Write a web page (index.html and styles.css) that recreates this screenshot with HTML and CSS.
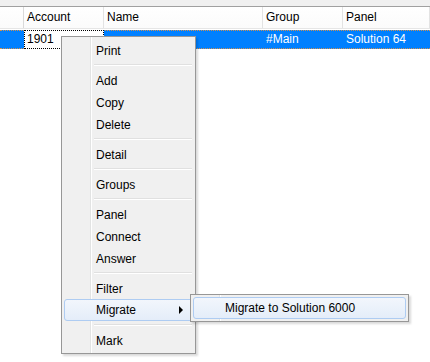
FILE: index.html
```html
<!DOCTYPE html>
<html lang="en">
<head>
    <meta charset="UTF-8">
    <title>Accounts</title>
    <link rel="stylesheet" href="styles.css">
</head>
<body>

    <div class="toolbar-strip"></div>

    <div class="grid">
        <div class="grid-row header">
            <div class="cell col-indicator"></div>
            <div class="cell col-account">Account</div>
            <div class="cell col-name">Name</div>
            <div class="cell col-group">Group</div>
            <div class="cell col-panel">Panel</div>
        </div>
        <div class="grid-row data selected">
            <div class="cell col-indicator"></div>
            <div class="cell col-account focused">1901</div>
            <div class="cell col-name"></div>
            <div class="cell col-group">#Main</div>
            <div class="cell col-panel">Solution 64</div>
        </div>
    </div>

    <!-- context menu -->
    <div class="context-menu">
        <div class="menu-item">Print</div>
        <div class="menu-separator"></div>
        <div class="menu-item">Add</div>
        <div class="menu-item">Copy</div>
        <div class="menu-item">Delete</div>
        <div class="menu-separator"></div>
        <div class="menu-item">Detail</div>
        <div class="menu-separator"></div>
        <div class="menu-item">Groups</div>
        <div class="menu-separator"></div>
        <div class="menu-item">Panel</div>
        <div class="menu-item">Connect</div>
        <div class="menu-item">Answer</div>
        <div class="menu-separator"></div>
        <div class="menu-item">Filter</div>
        <div class="menu-item has-sub hover">Migrate<span class="sub-arrow"></span></div>
        <div class="menu-separator"></div>
        <div class="menu-item">Mark</div>

        <div class="context-menu submenu">
            <div class="menu-item hover">Migrate to Solution 6000</div>
        </div>
    </div>

</body>
</html>
```

FILE: styles.css
```css
/* Layout basico */
body {
    margin: 0;
    width: 430px;
    height: 362px;
    overflow: hidden;
    background-color: #fff;
    font-family: "Liberation Sans", Arial, sans-serif;
    font-size: 12px;
    color: #000;
    position: relative;
}

.toolbar-strip {
    height: 6px;
    background-color: #f0f0f0;
    border-bottom: 1px solid #a0a0a0;
}

/* Grid */
.grid-row {
    display: flex;
}

.cell {
    box-sizing: border-box;
    padding-left: 3px;
    white-space: nowrap;
    overflow: hidden;
}

.col-indicator { width: 24px; padding: 0; }
.col-account { width: 80px; }
.col-name { width: 159px; }
.col-group { width: 80px; }
.col-panel { flex: 1; }

.header {
    height: 21px;
    background: linear-gradient(#ffffff, #fbfbfb);
    border-bottom: 1px solid #e6e6e6;
}

.header .cell {
    line-height: 21px;
    border-right: 1px solid #e3e3e3;
}

.header .col-indicator {
    border-right-color: #dadada;
}

.data {
    margin-top: 1px;
    height: 19px;
    line-height: 17px;
}

.selected {
    background-color: #0080ff;
    color: #fff;
    border-top: 1px dotted #d09050;
    border-bottom: 1px dotted #d09050;
    box-sizing: border-box;
}

.selected .focused {
    background-color: #fff;
    color: #000;
    border-left: 1px dotted #000;
    border-right: 1px dotted #000;
    margin-top: -1px;
    margin-bottom: -1px;
    border-top: 1px dotted #000;
    border-bottom: 1px dotted #000;
    padding-left: 2px;
}

/* Menu de contexto */
.context-menu {
    position: absolute;
    left: 61px;
    top: 36px;
    width: 135px;
    box-sizing: border-box;
    padding: 2px;
    background-color: #f0f0f0;
    border: 1px solid #979797;
    box-shadow: 2px 2px 2px rgba(0, 0, 0, 0.15);
    background-image: linear-gradient(to right, transparent 28px, #e2e3e3 28px, #e2e3e3 29px, #fff 29px, #fff 30px, transparent 30px);
}

.menu-item {
    height: 22px;
    line-height: 22px;
    padding-left: 31px;
    position: relative;
    box-sizing: border-box;
    border: 1px solid transparent;
    border-radius: 3px;
}

.menu-item.hover {
    border-color: #aeccf2;
    background: linear-gradient(#f2f6fc, #e4edf9);
    line-height: 20px;
}

.menu-separator {
    height: 2px;
    margin: 3px 1px 3px 30px;
    border-top: 1px solid #e0e0e0;
    border-bottom: 1px solid #fff;
    box-sizing: border-box;
}

.sub-arrow {
    position: absolute;
    right: 9px;
    top: 6px;
    width: 0;
    height: 0;
    border-top: 4px solid transparent;
    border-bottom: 4px solid transparent;
    border-left: 4px solid #000;
}

.submenu {
    left: 128px;
    top: 257px;
    width: 219px;
    height: 28px;
}
```
